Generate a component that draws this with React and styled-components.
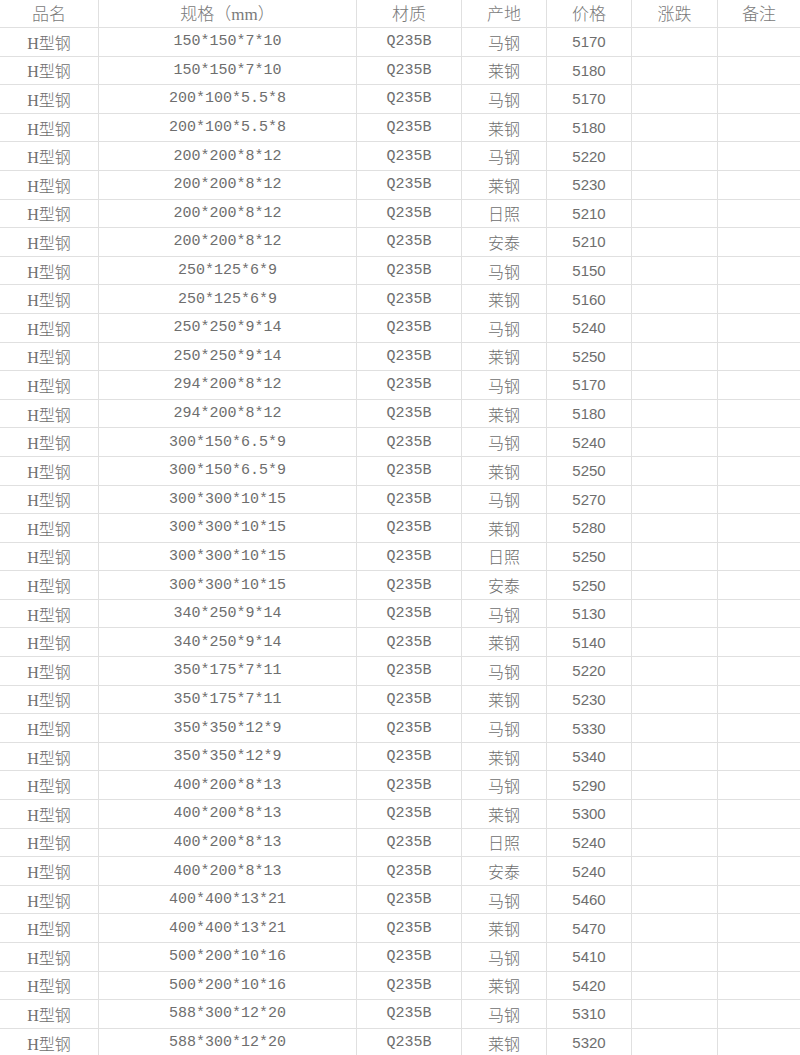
import styled, { createGlobalStyle } from "styled-components"

const GlobalStyle = createGlobalStyle`
    html, body {
        margin: 0;
        padding: 0;
        background: #ffffff;
    }
`

const headers = ["品名", "规格（mm）", "材质", "产地", "价格", "涨跌", "备注"]

const rows = [
    ["150*150*7*10", "马钢", 5170],
    ["150*150*7*10", "莱钢", 5180],
    ["200*100*5.5*8", "马钢", 5170],
    ["200*100*5.5*8", "莱钢", 5180],
    ["200*200*8*12", "马钢", 5220],
    ["200*200*8*12", "莱钢", 5230],
    ["200*200*8*12", "日照", 5210],
    ["200*200*8*12", "安泰", 5210],
    ["250*125*6*9", "马钢", 5150],
    ["250*125*6*9", "莱钢", 5160],
    ["250*250*9*14", "马钢", 5240],
    ["250*250*9*14", "莱钢", 5250],
    ["294*200*8*12", "马钢", 5170],
    ["294*200*8*12", "莱钢", 5180],
    ["300*150*6.5*9", "马钢", 5240],
    ["300*150*6.5*9", "莱钢", 5250],
    ["300*300*10*15", "马钢", 5270],
    ["300*300*10*15", "莱钢", 5280],
    ["300*300*10*15", "日照", 5250],
    ["300*300*10*15", "安泰", 5250],
    ["340*250*9*14", "马钢", 5130],
    ["340*250*9*14", "莱钢", 5140],
    ["350*175*7*11", "马钢", 5220],
    ["350*175*7*11", "莱钢", 5230],
    ["350*350*12*9", "马钢", 5330],
    ["350*350*12*9", "莱钢", 5340],
    ["400*200*8*13", "马钢", 5290],
    ["400*200*8*13", "莱钢", 5300],
    ["400*200*8*13", "日照", 5240],
    ["400*200*8*13", "安泰", 5240],
    ["400*400*13*21", "马钢", 5460],
    ["400*400*13*21", "莱钢", 5470],
    ["500*200*10*16", "马钢", 5410],
    ["500*200*10*16", "莱钢", 5420],
    ["588*300*12*20", "马钢", 5310],
    ["588*300*12*20", "莱钢", 5320],
]

export default function App() {
    return (
        <>
            <GlobalStyle />
            <Sheet>
                {headers.map((h, i) => (
                    <HeadCell key={h} last={i === headers.length - 1}>{h}</HeadCell>
                ))}
                {rows.map((r, i) => (
                    <Row key={i}>
                        <Cell>H型钢</Cell>
                        <Cell kind="spec">{r[0]}</Cell>
                        <Cell kind="spec">Q235B</Cell>
                        <Cell>{r[1]}</Cell>
                        <Cell kind="num">{r[2]}</Cell>
                        <Cell></Cell>
                        <Cell last></Cell>
                    </Row>
                ))}
            </Sheet>
        </>
    )
}

const Sheet = styled.div`
    display: grid;
    grid-template-columns: 99px 258px 105px 85px 85px 86px 82px;
    grid-template-rows: 28px repeat(36, 28.6px);
    width: 800px;
    color: #6e6e6e;
    font-family: "Liberation Serif", "Noto Sans CJK SC", serif;
`

const Row = styled.div`
    display: contents;
`

const HeadCell = styled.div`
    display: flex;
    align-items: center;
    justify-content: center;
    box-sizing: border-box;
    border-bottom: 1px solid #e0e0e0;
    border-right: ${p => p.last ? "none" : "1px solid #e0e0e0"};
    font-size: 17px;
    font-weight: 300;
    color: #7a7a7a;
    padding-bottom: 2px;
`

const Cell = styled.div`
    display: flex;
    align-items: center;
    justify-content: center;
    box-sizing: border-box;
    border-bottom: 1px solid #e0e0e0;
    border-right: ${p => p.last ? "none" : "1px solid #e0e0e0"};
    font-size: ${p => p.kind === "spec" ? "15px" : p.kind === "num" ? "15px" : "16px"};
    font-weight: 300;
    font-family: ${p => p.kind === "spec"
        ? "\"Liberation Mono\", \"Noto Sans CJK SC\", monospace"
        : p.kind === "num"
            ? "\"Liberation Sans\", \"Noto Sans CJK SC\", sans-serif"
            : "\"Liberation Serif\", \"Noto Sans CJK SC\", serif"};
    white-space: nowrap;
`
